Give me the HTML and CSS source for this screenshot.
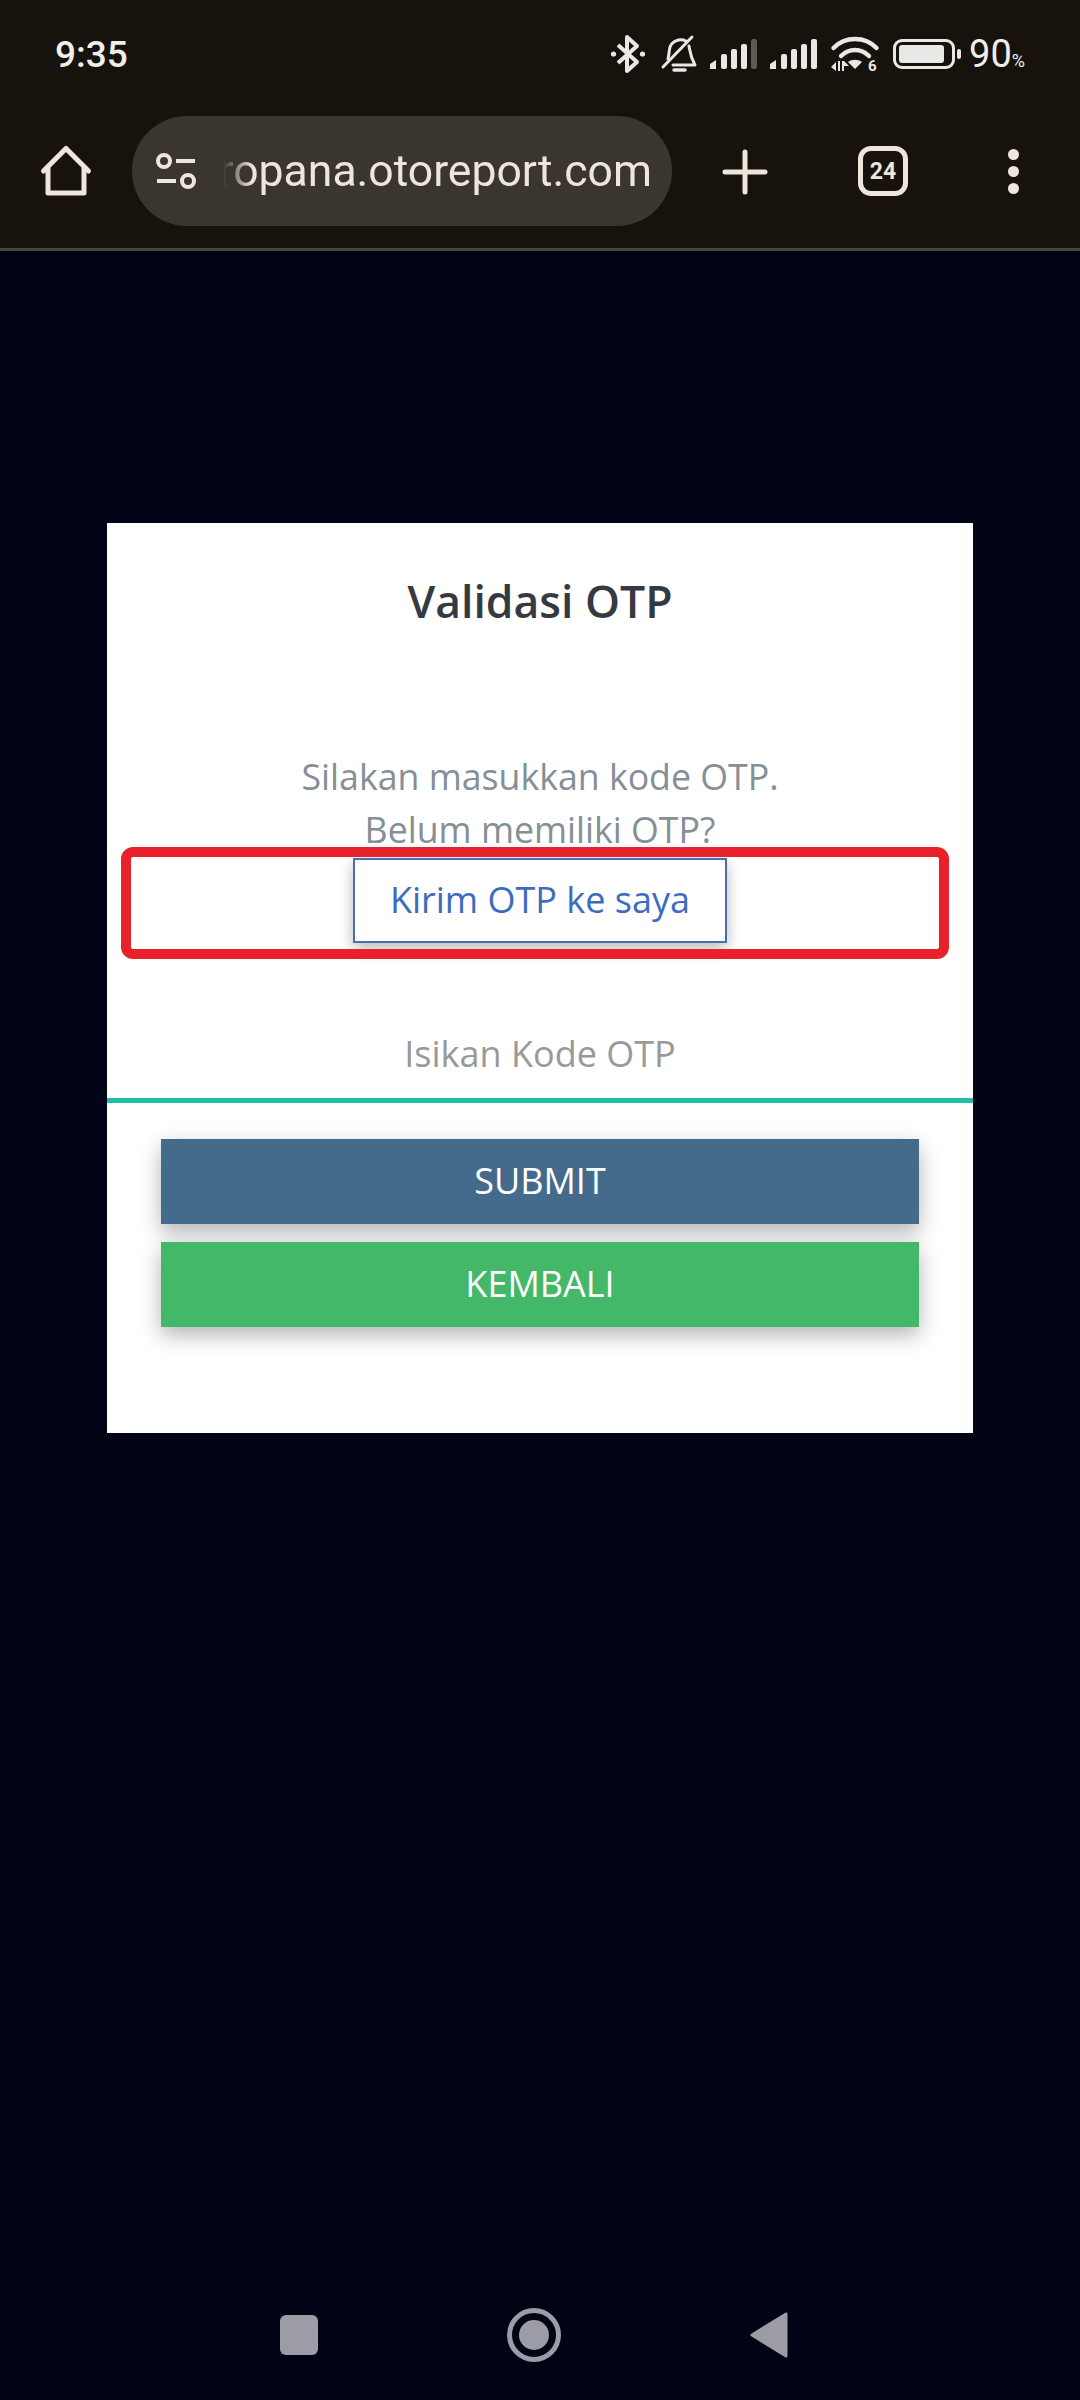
FILE: index.html
```html
<!DOCTYPE html>
<html lang="id">
<head>
  <meta charset="UTF-8">
  <meta name="viewport" content="width=device-width, initial-scale=1.0">
  <title>Validasi OTP</title>
  <link rel="stylesheet" href="styles.css">
</head>
<body>
  <div class="screen">
    <header class="chrome">
      <div class="status-bar">
        <span class="clock">9:35</span>
        <div class="status-icons">
          <svg class="ic-bt" width="36" height="40" viewBox="0 0 36 40" fill="none" stroke="#e8e8e6" stroke-width="4" stroke-linejoin="round">
            <path d="M8 11 L27 28 L17 37 V3 L27 12 L8 29"/>
            <circle cx="3.5" cy="20" r="2.6" fill="#e8e8e6" stroke="none"/>
            <circle cx="32.5" cy="20" r="2.6" fill="#e8e8e6" stroke="none"/>
          </svg>
          <svg class="ic-bell" width="36" height="38" viewBox="0 0 36 38" fill="none" stroke="#e8e8e6" stroke-width="3" stroke-linecap="round" stroke-linejoin="round">
            <path d="M7 24 C8 20 8 16 9 12 C11 6 19 3 25 6"/>
            <path d="M28 11 C29 16 29 21 34 30 H12"/>
            <path d="M31 2 L2 32"/>
            <path d="M13 35 H24" stroke-width="3.5"/>
          </svg>
          <svg class="ic-signal" width="48" height="31" viewBox="0 0 48 31">
            <path fill="#e8e8e6" d="M0 25 L6 21 V30 H0 Z"/>
            <rect x="11" y="15" width="6" height="15" rx="2" fill="#e8e8e6"/>
            <rect x="21" y="10" width="6" height="20" rx="2" fill="#e8e8e6"/>
            <rect x="31" y="5" width="6" height="25" rx="2" fill="#e8e8e6"/>
            <rect x="41" y="0" width="6" height="30" rx="2" fill="#5d5a55"/>
          </svg>
          <svg class="ic-signal" width="48" height="31" viewBox="0 0 48 31">
            <path fill="#e8e8e6" d="M0 25 L6 21 V30 H0 Z"/>
            <rect x="11" y="15" width="6" height="15" rx="2" fill="#e8e8e6"/>
            <rect x="21" y="10" width="6" height="20" rx="2" fill="#e8e8e6"/>
            <rect x="31" y="5" width="6" height="25" rx="2" fill="#e8e8e6"/>
            <rect x="41" y="0" width="6" height="30" rx="2" fill="#e8e8e6"/>
          </svg>
          <svg class="ic-wifi" width="48" height="36" viewBox="0 0 48 36" fill="none" stroke="#e8e8e6" stroke-width="4.5" stroke-linecap="round">
            <path d="M2.5 12 C14 0 34 0 45.5 12"/>
            <path d="M10 20 C18 12 30 12 38 20"/>
            <path fill="#e8e8e6" stroke="none" d="M17 26 C21 23 27 23 31 26 L24 33 Z"/>
            <path fill="#e8e8e6" stroke="none" d="M0 31 L5 26 V35 Z M7 25 H9 V35 H7 Z M11 25 H13 V35 H11 Z M13 25 L18 30 H13 Z"/>
            <text x="37" y="35" class="wifi-six">6</text>
          </svg>
          <div class="battery">
            <div class="battery-body"><div class="battery-fill"></div></div>
            <div class="battery-nub"></div>
          </div>
          <span class="battery-pct">90<small>%</small></span>
        </div>
      </div>
      <div class="toolbar">
        <svg class="ic-home" width="50" height="50" viewBox="0 0 50 50" fill="none" stroke="#efe6db" stroke-width="5" stroke-linecap="round" stroke-linejoin="round">
          <path d="M2.5 25 L25 2.5 L47.5 25"/>
          <path d="M7 22 V47 H43 V22"/>
        </svg>
        <div class="url-pill">
          <svg width="40" height="34" viewBox="0 0 40 34" fill="none" stroke="#efe6db" stroke-width="4">
            <circle cx="8" cy="7" r="6"/>
            <circle cx="32" cy="27" r="6"/>
            <path d="M20 7 H39 M1 27 H20"/>
          </svg>
          <div class="url-clip"><span class="url-text">ropana.otoreport.com</span></div>
        </div>
        <svg class="ic-plus" width="46" height="46" viewBox="0 0 46 46" stroke="#efe6db" stroke-width="5" stroke-linecap="round">
          <path d="M23 3 V43 M3 23 H43"/>
        </svg>
        <div class="tab-count">24</div>
        <div class="more-dots"><i></i><i></i><i></i></div>
      </div>
    </header>

    <main class="page">
      <section class="card">
        <h1 class="card-title">Validasi OTP</h1>
        <p class="card-text">Silakan masukkan kode OTP.<br>Belum memiliki OTP?</p>
        <div class="send-row">
          <button class="btn-send" type="button">Kirim OTP ke saya</button>
          <div class="highlight"></div>
        </div>
        <input class="otp-input" type="text" placeholder="Isikan Kode OTP">
        <div class="actions">
          <button class="btn btn-submit" type="button">SUBMIT</button>
          <button class="btn btn-back" type="button">KEMBALI</button>
        </div>
      </section>
    </main>

    <nav class="nav-bar">
      <div class="nav-square"></div>
      <div class="nav-home"><div class="nav-home-dot"></div></div>
      <svg width="38" height="46" viewBox="0 0 38 46"><path fill="#9c9ca6" stroke="#9c9ca6" stroke-width="3" stroke-linejoin="round" d="M2 23 L36 2 V44 Z"/></svg>
    </nav>
  </div>
</body>
</html>
```

FILE: styles.css
```css
* {
  box-sizing: border-box;
}

html, body {
  margin: 0;
  padding: 0;
}

body {
  background-color: #000415;
  font-family: "Open Sans", sans-serif;
}

.screen {
  width: 1080px;
  height: 2400px;
  display: flex;
  flex-direction: column;
  overflow: hidden;
}

svg {
  overflow: visible;
}

/* barra do navegador */
.chrome {
  height: 251px;
  background-color: #17130c;
  border-bottom: 3px solid #48443e;
  font-family: Roboto, sans-serif;
}

.status-bar {
  height: 108px;
  padding: 0 55px;
  display: flex;
  align-items: center;
  justify-content: space-between;
  color: #eeeeec;
}

.clock {
  font-size: 37px;
  font-weight: 500;
}

.status-icons {
  display: flex;
  align-items: center;
}

.ic-bt { margin-right: 15px; }
.ic-bell { margin-right: 13px; }
.ic-signal { margin-right: 12px; }
.ic-wifi { margin-left: 1px; margin-right: 14px; }

.wifi-six {
  font-family: Roboto, sans-serif;
  font-size: 15px;
  font-weight: 700;
  fill: #e8e8e6;
  stroke: none;
}

.battery {
  display: flex;
  align-items: center;
  margin-right: 8px;
}

.battery-body {
  width: 62px;
  height: 30px;
  border: 3px solid #e8e8e6;
  border-radius: 9px;
  padding: 3px;
}

.battery-fill {
  width: 90%;
  height: 100%;
  background-color: #e8e8e6;
  border-radius: 3px;
}

.battery-nub {
  width: 4px;
  height: 10px;
  margin-left: 2px;
  background-color: #e8e8e6;
  border-radius: 2px;
}

.battery-pct {
  font-size: 38px;
  line-height: 44px;
  padding-top: 6px;
  white-space: nowrap;
}

.battery-pct small {
  font-size: 18px;
}

.toolbar {
  height: 140px;
  padding: 8px 0 0 41px;
  display: flex;
  align-items: flex-start;
}

.ic-home {
  margin-top: 30px;
  margin-right: 41px;
}

.url-pill {
  width: 540px;
  height: 110px;
  border-radius: 55px;
  background-color: #3a362f;
  display: flex;
  align-items: center;
  padding-left: 24px;
  margin-right: 50px;
}

.url-clip {
  width: 438px;
  margin-left: 18px;
  overflow: hidden;
  white-space: nowrap;
  display: flex;
  justify-content: flex-end;
  -webkit-mask-image: linear-gradient(to right, rgba(0, 0, 0, 0) 9px, #000 38px);
  mask-image: linear-gradient(to right, rgba(0, 0, 0, 0) 9px, #000 38px);
}

.url-text {
  font-size: 44.5px;
  color: #efe6db;
}

.ic-plus {
  margin-top: 33px;
  margin-right: 90px;
}

.tab-count {
  width: 50px;
  height: 50px;
  margin-top: 30px;
  margin-right: 100px;
  border: 5px solid #efe6db;
  border-radius: 13px;
  color: #efe6db;
  font-size: 23px;
  font-weight: 700;
  display: flex;
  align-items: center;
  justify-content: center;
}

.more-dots {
  width: 11px;
  margin-top: 33px;
  display: flex;
  flex-direction: column;
  gap: 6px;
}

.more-dots i {
  display: block;
  width: 11px;
  height: 11px;
  border-radius: 50%;
  background-color: #efe6db;
}

/* conteudo */
.page {
  flex: 1;
  padding-top: 272px;
  display: flex;
  justify-content: center;
  align-items: flex-start;
}

.card {
  width: 866px;
  height: 910px;
  background-color: #ffffff;
  text-align: center;
}

.card-title {
  margin: 0;
  padding-top: 47px;
  font-size: 44.5px;
  line-height: 61px;
  font-weight: 600;
  color: #343a40;
}

.card-text {
  margin: 119px 0 0;
  font-size: 35.7px;
  line-height: 53px;
  color: #868e96;
}

.send-row {
  position: relative;
  height: 85px;
  margin-top: 2px;
  display: flex;
  justify-content: center;
}

.btn-send {
  width: 374px;
  height: 85px;
  background-color: #ffffff;
  border: 2px solid #4a6fb0;
  box-shadow: 0 5px 14px rgba(0, 0, 0, 0.28);
  color: #3d6bc0;
  font-family: "Open Sans", sans-serif;
  font-size: 36px;
  padding: 0 0 2px;
}

/* marcacao vermelha sobre a captura */
.highlight {
  position: absolute;
  left: 14px;
  top: -11px;
  width: 828px;
  height: 112px;
  border: 10px solid #e8212b;
  border-radius: 12px;
}

.otp-input {
  display: block;
  width: 100%;
  height: 96px;
  margin-top: 64px;
  border: none;
  border-bottom: 5px solid #20c0a8;
  outline: none;
  background: transparent;
  text-align: center;
  font-family: "Open Sans", sans-serif;
  font-size: 36px;
  padding: 2px 0 0;
}

.otp-input::placeholder {
  color: #999999;
  opacity: 1;
}

.actions {
  padding: 36px 54px 0;
  display: flex;
  flex-direction: column;
  gap: 18px;
}

.btn {
  height: 85px;
  border: none;
  color: #ffffff;
  font-family: "Open Sans", sans-serif;
  font-size: 36px;
  box-shadow: 0 8px 20px rgba(0, 0, 0, 0.3);
  padding: 0 0 3px;
}

.btn-submit {
  background-color: #456b8c;
}

.btn-back {
  background-color: #43b868;
}

/* barra de navegacao */
.nav-bar {
  height: 130px;
  padding: 0 292px 0 280px;
  display: flex;
  align-items: center;
  justify-content: space-between;
}

.nav-square {
  width: 38px;
  height: 40px;
  border-radius: 6px;
  background-color: #9c9ca6;
}

.nav-home {
  width: 54px;
  height: 54px;
  border: 5px solid #9c9ca6;
  border-radius: 50%;
  display: flex;
  align-items: center;
  justify-content: center;
}

.nav-home-dot {
  width: 30px;
  height: 30px;
  border-radius: 50%;
  background-color: #9c9ca6;
}
```
